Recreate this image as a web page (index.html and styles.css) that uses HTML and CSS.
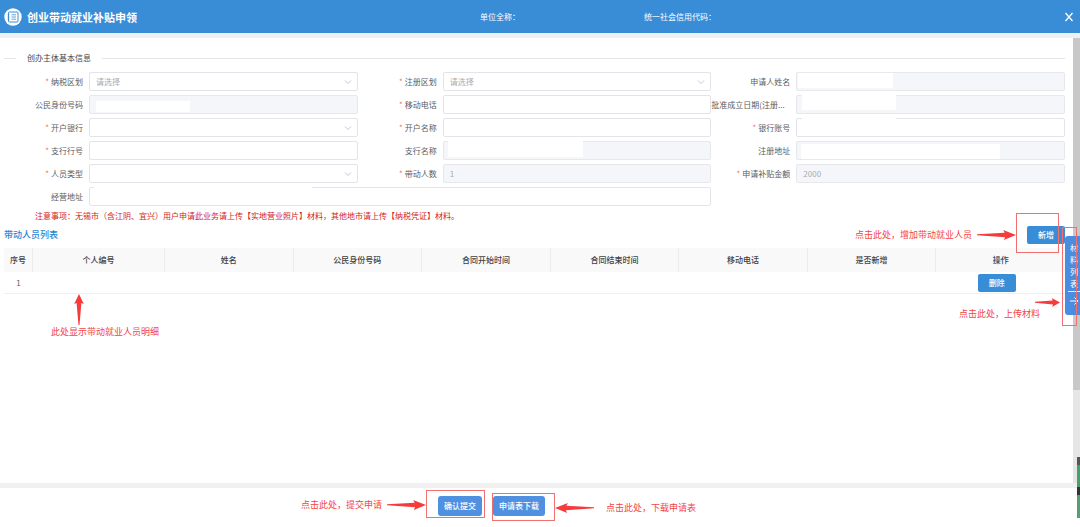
FILE: index.html
```html
<!DOCTYPE html>
<html lang="zh-CN">
<head>
<meta charset="utf-8">
<title>创业带动就业补贴申领</title>
<link rel="stylesheet" href="styles.css">
</head>
<body>
<svg class="defs" aria-hidden="true">
  <symbol id="chevron" viewBox="0 0 8 8"><path d="M1 2.5 4 5.5 7 2.5" fill="none" stroke="#b4b8c0" stroke-width="0.8"/></symbol>
  <symbol id="arrow" viewBox="0 0 38 12" preserveAspectRatio="none"><path d="M0 5.200 27 3.700 25.500 1 38 6 26 11 27.500 8.300 0 6.300Z" fill="#f53b3b"/></symbol>
</svg>
<header class="topbar">
  <div class="brand">
    <svg class="logo" viewBox="0 0 18 18"><circle cx="9" cy="9" r="8.700" fill="#fff"/><rect x="4.500" y="4" width="9.500" height="10" rx="1" fill="none" stroke="#398dd7" stroke-width="1"/><path d="M7.500 6.800h4.500M7.500 9h4.500M7.500 11.200h4.500M3.500 6.800h2M3.500 9h2M3.500 11.200h2" stroke="#398dd7" stroke-width=".8"/></svg>
    <h1>创业带动就业补贴申领</h1>
  </div>
  <span>单位全称：</span>
  <span>统一社会信用代码：</span>
  <button class="close" type="button" aria-label="关闭"><svg viewBox="0 0 10 10"><path d="M1.500 1 8.500 9M8.500 1 1.500 9" stroke="#fff" stroke-width="1.300"/></svg></button>
</header>

<main class="page">
  <div class="content">
    <h2 class="legend">创办主体基本信息</h2>
    <form class="form">
      <div class="field"><label class="required" for="tax">纳税区划</label><div class="control"><select id="tax"><option>请选择</option></select><svg class="chevron"><use href="#chevron"/></svg></div></div>
      <div class="field"><label class="required" for="reg">注册区划</label><div class="control"><select id="reg"><option>请选择</option></select><svg class="chevron"><use href="#chevron"/></svg></div></div>
      <div class="field"><label for="name">申请人姓名</label><div class="control"><input id="name" disabled><i class="mask mask-name"></i></div></div>

      <div class="field"><label for="idno">公民身份号码</label><div class="control"><input id="idno" disabled><i class="mask mask-id"></i></div></div>
      <div class="field"><label class="required" for="phone">移动电话</label><div class="control"><input id="phone"></div></div>
      <div class="field"><label class="clipped" for="date">批准成立日期(注册...</label><div class="control"><input id="date" disabled><i class="mask mask-date"></i></div></div>

      <div class="field"><label class="required" for="bank">开户银行</label><div class="control"><select id="bank"><option></option></select><svg class="chevron"><use href="#chevron"/></svg></div></div>
      <div class="field"><label class="required" for="acctname">开户名称</label><div class="control"><input id="acctname"></div></div>
      <div class="field"><label class="required" for="acct">银行账号</label><div class="control"><input id="acct"><i class="mask mask-acct"></i></div></div>

      <div class="field"><label class="required" for="branchno">支行行号</label><div class="control"><input id="branchno"></div></div>
      <div class="field"><label for="branch">支行名称</label><div class="control"><input id="branch" disabled><i class="mask mask-branch"></i></div></div>
      <div class="field"><label for="regaddr">注册地址</label><div class="control"><input id="regaddr" disabled><i class="mask mask-regaddr"></i></div></div>

      <div class="field"><label class="required" for="type">人员类型</label><div class="control"><select id="type"><option></option></select><svg class="chevron"><use href="#chevron"/></svg></div></div>
      <div class="field"><label class="required" for="count">带动人数</label><div class="control"><input id="count" value="1" disabled></div></div>
      <div class="field"><label class="required" for="amount">申请补贴金额</label><div class="control"><input id="amount" value="2000" disabled></div></div>

      <div class="field wide"><label for="addr">经营地址</label><div class="control"><input id="addr"><i class="mask mask-addr"></i></div></div>
    </form>
    <p class="notice">注意事项：无锡市（含江阴、宜兴）用户申请此业务请上传【实地营业照片】材料，其他地市请上传【纳税凭证】材料。</p>

    <div class="list-head">
      <h2>带动人员列表</h2>
      <div class="anchor">
        <button class="btn" type="button">新增</button>
        <i class="frame frame-add"></i>
        <div class="note note-add"><span>点击此处，增加带动就业人员</span><svg class="arrow"><use href="#arrow"/></svg></div>
      </div>
    </div>
    <div class="anchor">
      <table>
        <colgroup><col class="col-index"><col class="col-person"><col><col><col><col><col><col><col></colgroup>
        <thead><tr><th>序号</th><th>个人编号</th><th>姓名</th><th>公民身份号码</th><th>合同开始时间</th><th>合同结束时间</th><th>移动电话</th><th>是否新增</th><th>操作</th></tr></thead>
        <tbody><tr><td>1</td><td></td><td></td><td></td><td></td><td></td><td></td><td></td><td class="ops"><button class="btn" type="button">删除</button></td></tr></tbody>
      </table>
      <div class="note-detail"><svg viewBox="0 0 10 32"><path d="M5 0 9.800 10 7.400 9 5.500 31H4.500L2.600 9 .2 10Z" fill="#f53b3b"/></svg><span>此处显示带动就业人员明细</span></div>
    </div>
  </div>
  <div class="scrollbar"><div class="thumb"></div></div>

  <div class="side">
    <button class="side-tab" type="button"><span>材料列表</span><svg viewBox="0 0 12 20"><path d="M0 .5H12" stroke="#dfeafa"/><path d="M2 10H10M6.500 6.500 10 10 6.500 13.500" fill="none" stroke="#fff" stroke-width="1"/></svg></button>
    <i class="frame frame-side"></i>
    <div class="note-upload"><svg class="arrow"><use href="#arrow"/></svg><span>点击此处，上传材料</span></div>
  </div>
</main>

<footer class="actions">
  <div class="anchor">
    <button class="btn submit" type="button">确认提交</button>
    <i class="frame frame-submit"></i>
    <div class="note note-submit"><span>点击此处，提交申请</span><svg class="arrow"><use href="#arrow"/></svg></div>
  </div>
  <div class="anchor">
    <button class="btn submit" type="button">申请表下载</button>
    <i class="frame frame-download"></i>
    <div class="note note-download"><svg class="arrow flipped"><use href="#arrow"/></svg><span>点击此处，下载申请表</span></div>
  </div>
</footer>
<i class="edge-widget"></i>
</body>
</html>
```
FILE: styles.css
```css
* { box-sizing: border-box; }

body {
  margin: 0;
  min-height: 100vh;
  display: flex;
  flex-direction: column;
  position: relative;
  overflow-x: hidden;
  background: #fff;
  color: #5a5d63;
  font: 8px/12px "Noto Sans CJK SC", sans-serif;
}

h1, h2, p { margin: 0; }
button, input, select { font: inherit; margin: 0; }
.defs { position: absolute; width: 0; height: 0; }

/* Title bar */
.topbar {
  display: grid;
  grid-template-columns: 480fr 164fr 420fr auto;
  align-items: center;
  height: 33px;
  padding-right: 6px;
  background: #398dd7;
  color: #fff;
}
.brand { display: flex; align-items: center; gap: 5px; padding-left: 4px; }
.brand h1 { font-size: 11px; line-height: 16px; font-weight: 700; }
.logo { width: 18px; height: 18px; }
.close { width: 10px; height: 10px; padding: 0; border: 0; background: none; display: flex; }
.close svg { width: 10px; height: 10px; }

/* Page body */
.page {
  flex: 1;
  display: flex;
  position: relative;
  border: solid #f0f0f0;
  border-width: 5px 0;
}
.content { flex: 1; min-width: 0; padding: 14px 8px 0 4px; }
.scrollbar { width: 7px; background: #e6e6e6; }
.thumb { height: 79%; background: #c8c8c8; }

.legend {
  display: flex;
  align-items: center;
  gap: 11px;
  font-size: 8px;
  font-weight: 400;
  color: #44474c;
}
.legend::before, .legend::after { content: ""; height: 1px; background: #e6e6e8; }
.legend::before { width: 12px; }
.legend::after { flex: 1; }

/* Form */
.form {
  display: grid;
  grid-template-columns: repeat(3, 1fr);
  row-gap: 4px;
  margin-top: 8px;
}
.field { display: flex; align-items: center; min-width: 0; }
.wide { grid-column: span 2; }
.field label { width: 85px; padding-right: 6px; text-align: right; white-space: nowrap; flex: none; }
.field .clipped { text-align: left; }
.required::before { content: "*"; color: #f56c6c; margin-right: 2px; }
.control { flex: 1; min-width: 0; position: relative; display: flex; }
.control input, .control select {
  width: 100%;
  height: 19px;
  padding: 0 6px;
  border: 1px solid #e2e4e9;
  border-radius: 2px;
  background: #fff;
  color: #a9abb0;
  appearance: none;
  outline: 0;
}
.control input:disabled { background: #f4f6fa; border-color: #e6e8ed; }
.chevron { position: absolute; right: 6px; top: 6px; width: 8px; height: 8px; pointer-events: none; }
.mask { position: absolute; background: #fff; }
.mask-name { left: 2px; top: 1px; width: 95px; height: 15px; }
.mask-id { left: 7px; top: 6px; width: 94px; height: 11px; }
.mask-date { left: 6px; top: 0; width: 94px; height: 15px; }
.mask-acct { left: 6px; top: 0; width: 94px; height: 2px; }
.mask-branch { left: 5px; top: 0; width: 135px; height: 16px; }
.mask-regaddr { left: 5px; top: 3px; width: 199px; height: 15px; }
.mask-addr { left: 5px; top: 0; width: 218px; height: 2px; }

.notice { margin: 4px 0 0 31px; color: #d01c1c; }

/* Member list */
.list-head { display: flex; justify-content: space-between; align-items: center; margin: 4px 0; }
.list-head h2 { font-size: 9px; font-weight: 500; color: #1f86cf; }
.anchor { position: relative; }
.list-head .anchor { z-index: 1; }
.btn {
  display: block;
  min-width: 38px;
  height: 18px;
  padding: 0 6px;
  border: 0;
  border-radius: 2px;
  background: #398dd7;
  color: #fff;
  font-weight: 500;
}
table { width: 100%; border-collapse: separate; border-spacing: 0; table-layout: fixed; }
.col-index { width: 29px; }
.col-person { width: 132px; }
th, td { padding: 0; text-align: center; font-weight: 400; }
th { height: 24px; background: #f9f9fa; color: #3e4146; border-right: 1px solid #ececee; font-weight: 500; }
th:last-child { border-right: 0; }
td { height: 22px; border-bottom: 1px solid #eeeff1; }
.ops { padding-right: 8px; }
.ops .btn { margin: 0 auto; }

/* Guide marks */
.frame { position: absolute; border: 1px solid #f07070; pointer-events: none; }
.note { position: absolute; display: flex; align-items: center; gap: 5px; }
.note, .note-detail, .note-upload { color: #f24545; font-size: 9px; white-space: nowrap; }
.arrow { width: 39px; height: 12px; }
.flipped { transform: scaleX(-1); }
.frame-add { left: -11px; top: -13px; width: 43px; height: 40px; }
.note-add { right: 49px; top: 3px; }
.note-detail { position: absolute; left: 47px; top: 46px; display: flex; flex-direction: column; }
.note-detail svg { width: 10px; height: 32px; margin-left: 23px; }

.side { position: absolute; z-index: 2; right: 0; top: 198px; }
.side-tab {
  display: flex;
  flex-direction: column;
  align-items: center;
  width: 15px;
  padding: 6px 0 4px 3px;
  border: 0;
  border-radius: 3px 0 0 3px;
  background: #4a8de0;
  color: #fff;
}
.side-tab span { width: 8px; white-space: normal; word-break: break-all; padding-bottom: 1px; }
.side-tab svg { width: 12px; height: 20px; }
.frame-side { right: 3px; top: -9px; width: 15px; height: 99px; }
.note-upload { position: absolute; right: 20px; top: 61px; display: flex; flex-direction: column; align-items: flex-end; }
.note-upload .arrow { width: 25px; height: 11px; }
.note-upload span { margin-right: 20px; }

/* Footer */
.actions { display: flex; justify-content: center; align-items: flex-start; gap: 11px; height: 39px; padding: 8px 97px 0 0; }
.submit { height: 20px; border-radius: 3px; background: #4f90e0; }
.frame-submit { left: -12px; top: -6px; width: 59px; height: 28px; }
.note-submit { right: 56px; top: 3px; }
.frame-download { left: -1px; top: -3px; width: 63px; height: 28px; }
.note-download { left: 62px; top: 6px; gap: 12px; }

.edge-widget {
  position: absolute;
  right: 0;
  bottom: 9px;
  width: 3px;
  height: 61px;
  background: linear-gradient(#555 0 8px, #45a06c 8px 30px, #333 30px 38px, #5a9c74 38px);
}
```
